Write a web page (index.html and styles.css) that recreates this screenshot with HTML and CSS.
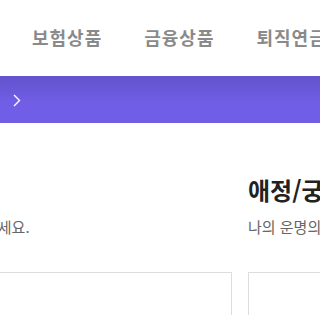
FILE: index.html
```html
<!DOCTYPE html>
<html lang="ko">
<head>
    <meta charset="UTF-8">
    <meta name="viewport" content="width=device-width, initial-scale=1.0">
    <title>운세</title>
    <link rel="stylesheet" href="styles.css">
</head>
<body>
    <header class="gnb">
        <a class="gnb-item" href="#">보험상품</a>
        <a class="gnb-item" href="#">금융상품</a>
        <a class="gnb-item" href="#">퇴직연금</a>
    </header>

    <div class="banner">
        <svg class="banner-arrow" width="8" height="13" viewBox="0 0 8 13">
            <path d="M1 1 L6.5 6.5 L1 12" fill="none" stroke="#ffffff" stroke-width="1.4"/>
        </svg>
    </div>

    <section class="fortune">
        <div class="fortune-track">
            <div class="fortune-col">
                <h2 class="fortune-title">금전운</h2>
                <p class="fortune-desc">재물운을 확인하세요.</p>
                <div class="fortune-card"></div>
            </div>
            <div class="fortune-col">
                <h2 class="fortune-title">애정/궁합</h2>
                <p class="fortune-desc">나의 운명의 상대를 찾아보세요.</p>
                <div class="fortune-card"></div>
            </div>
        </div>
    </section>
</body>
</html>
```

FILE: styles.css
```css
body {
    margin: 0;
    background: #ffffff;
    font-family: "Noto Sans CJK KR", "Noto Sans", sans-serif;
    overflow: hidden;
}

.gnb {
    display: flex;
    align-items: center;
    gap: 42px;
    height: 76px;
    padding-left: 32px;
    white-space: nowrap;
}

.gnb-item {
    color: #8a8a8a;
    font-size: 18px;
    font-weight: 700;
    letter-spacing: 1px;
    line-height: 24px;
    text-decoration: none;
    margin-top: -2px;
}

.banner {
    display: flex;
    align-items: center;
    height: 47px;
    padding-left: 13px;
    background: linear-gradient(180deg, #6454cd 0%, #6b59dc 35%, #715ee7 55%, #715ee7 100%);
}

.banner-arrow {
    display: block;
    margin-top: 1px;
}

.fortune {
    overflow: hidden;
    padding-top: 51px;
}

.fortune-track {
    display: flex;
    gap: 16px;
    margin-left: -103px;
}

.fortune-col {
    flex: 0 0 335px;
    width: 335px;
}

.fortune-title {
    margin: 0;
    color: #222222;
    font-size: 24px;
    font-weight: 700;
    line-height: 32px;
    white-space: nowrap;
}

.fortune-desc {
    margin: 10px 0 0;
    color: #666666;
    font-size: 15px;
    line-height: 22px;
    white-space: nowrap;
}

.fortune-card {
    height: 120px;
    margin-top: 34px;
    border: 1px solid #dddddd;
    box-sizing: border-box;
}
```
